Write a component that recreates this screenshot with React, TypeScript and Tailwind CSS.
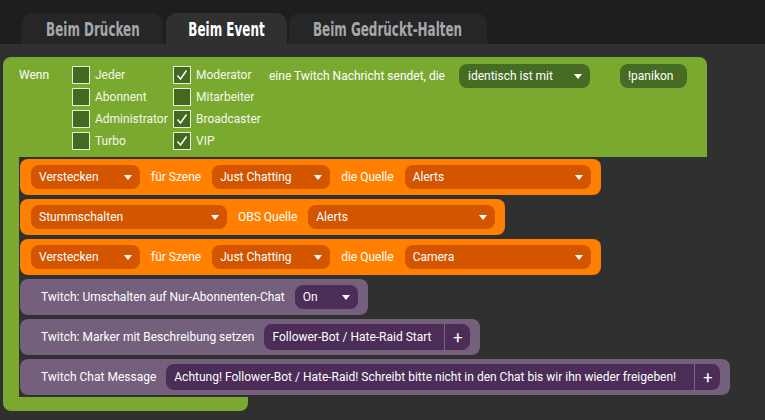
const font = "font-['Roboto',_'Liberation_Sans',_sans-serif]";

function Arrow() {
  return (
    <svg width="8" height="5" viewBox="0 0 8 5" className="shrink-0">
      <path d="M0 0 L8 0 L4 5 Z" fill="#ffffff" />
    </svg>
  );
}

function Dropdown({ label, className }: { label: string; className: string }) {
  return (
    <div className={`flex h-6 shrink-0 items-center justify-between rounded-lg pl-2 pr-2 text-white ${className}`}>
      <span>{label}</span>
      <Arrow />
    </div>
  );
}

function Check({ checked, label }: { checked?: boolean; label: string }) {
  return (
    <div className="flex h-[18px] items-center gap-[5px]">
      <div className="flex h-[18px] w-[18px] shrink-0 items-center justify-center border border-[#e8eedc] bg-[#416a1f]">
        {checked && (
          <svg width="14" height="14" viewBox="0 0 14 14">
            <path d="M2.5 7.5 L5.5 11 L11.5 2.5" fill="none" stroke="#ffffff" strokeWidth="1.4" />
          </svg>
        )}
      </div>
      <span className="text-[#f4f8ec]">{label}</span>
    </div>
  );
}

function OrangeRow({ children }: { children: React.ReactNode }) {
  return (
    <div className="flex h-9 w-fit items-center gap-[11px] rounded-lg bg-[#ff7f00] pl-[11px] pr-[10px] text-white">
      {children}
    </div>
  );
}

function PurpleRow({ children }: { children: React.ReactNode }) {
  return (
    <div className="flex h-9 w-fit items-center gap-[10px] rounded-lg bg-[#745f7c] pl-[21px] pr-[10px] text-white">
      {children}
    </div>
  );
}

function TextInput({ value, className }: { value: string; className: string }) {
  return (
    <div className={`flex h-[26px] shrink-0 items-stretch rounded-lg bg-[#4b2d57] ${className}`}>
      <div className="flex flex-1 items-center pl-2">{value}</div>
      <div className="w-px bg-[#7a6481]" />
      <div className="flex w-[25px] items-center justify-center text-[17px] leading-none">+</div>
    </div>
  );
}

function Tab({ label, active, className }: { label: string; active?: boolean; className: string }) {
  return (
    <div
      className={`flex h-[31px] items-center justify-center rounded-t-[11px] pt-[2px] ${className} ${
        active ? "bg-[#303030] text-white" : "bg-[#262626] text-[#a3a8ad]"
      }`}
    >
      <span className="scale-x-[0.7] font-['DejaVu_Sans_Condensed',sans-serif] text-[19px] font-bold">{label}</span>
    </div>
  );
}

export default function App() {
  return (
    <div className={`h-[420px] w-[765px] overflow-hidden whitespace-nowrap bg-[#303030] text-[12px] ${font}`}>
      <div className="flex h-[44px] items-end bg-[#1e1e1e] pl-[22px]">
        <Tab label="Beim Drücken" className="w-[141px]" />
        <Tab label="Beim Event" active className="ml-[3px] w-[121px]" />
        <Tab label="Beim Gedrückt-Halten" className="ml-[2px] w-[198px]" />
      </div>

      <div className="pl-[3px] pt-[13px]">
        {/* event header */}
        <div className="flex h-[100px] w-[704px] items-start rounded-t-lg bg-[#7aa92f] pl-[16px] pt-[9px] text-white">
          <div className="flex h-[18px] w-[53px] items-center">Wenn</div>
          <div className="flex w-[101px] flex-col gap-1">
            <Check label="Jeder" />
            <Check label="Abonnent" />
            <Check label="Administrator" />
            <Check label="Turbo" />
          </div>
          <div className="flex w-[96px] flex-col gap-1">
            <Check checked label="Moderator" />
            <Check label="Mitarbeiter" />
            <Check checked label="Broadcaster" />
            <Check checked label="VIP" />
          </div>
          <div className="-mt-[2px] flex items-center">
            <span className="w-[190px]">eine Twitch Nachricht sendet, die</span>
            <Dropdown label="identisch ist mit" className="w-[131px] bg-[#456c22] pl-[9px]" />
            <div className="ml-[30px] flex h-6 w-[67px] items-center rounded-lg bg-[#456c22] pl-2">!panikon</div>
          </div>
        </div>

        {/* statement slot */}
        <div className="flex">
          <div className="w-4 bg-[#7aa92f]" />
          <div className="flex flex-col gap-1 py-[2px] pl-px">
            <OrangeRow>
              <Dropdown label="Verstecken" className="w-[109px] bg-[#d45500]" />
              <span>für Szene</span>
              <Dropdown label="Just Chatting" className="w-[118px] bg-[#d45500]" />
              <span>die Quelle</span>
              <Dropdown label="Alerts" className="w-[186px] bg-[#d45500]" />
            </OrangeRow>
            <OrangeRow>
              <Dropdown label="Stummschalten" className="w-[196px] bg-[#d45500]" />
              <span>OBS Quelle</span>
              <Dropdown label="Alerts" className="w-[187px] bg-[#d45500]" />
            </OrangeRow>
            <OrangeRow>
              <Dropdown label="Verstecken" className="w-[109px] bg-[#d45500]" />
              <span>für Szene</span>
              <Dropdown label="Just Chatting" className="w-[118px] bg-[#d45500]" />
              <span>die Quelle</span>
              <Dropdown label="Camera" className="w-[186px] bg-[#d45500]" />
            </OrangeRow>
            <PurpleRow>
              <span>Twitch: Umschalten auf Nur-Abonnenten-Chat</span>
              <Dropdown label="On" className="w-[63px] bg-[#4b2d57]" />
            </PurpleRow>
            <PurpleRow>
              <span>Twitch: Marker mit Beschreibung setzen</span>
              <TextInput value="Follower-Bot / Hate-Raid Start" className="w-[206px]" />
            </PurpleRow>
            <PurpleRow>
              <span>Twitch Chat Message</span>
              <TextInput
                value="Achtung! Follower-Bot / Hate-Raid! Schreibt bitte nicht in den Chat bis wir ihn wieder freigeben!"
                className="w-[554px]"
              />
            </PurpleRow>
          </div>
        </div>

        <div className="h-[14px] w-[245px] rounded-b-lg bg-[#7aa92f]" />
      </div>
    </div>
  );
}
